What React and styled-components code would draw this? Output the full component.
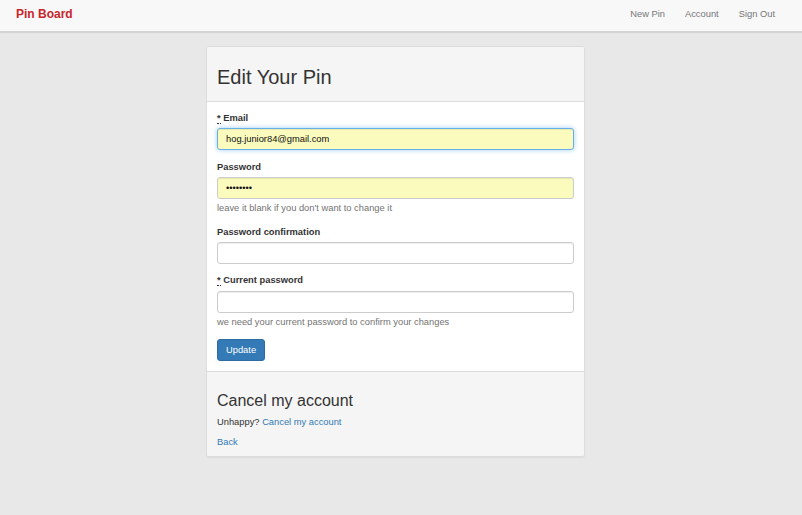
import React from "react";
import styled, { createGlobalStyle } from "styled-components";

const Global = createGlobalStyle`
  html, body { margin: 0; padding: 0; }
  body {
    background: #e8e8e8;
    font-family: "Liberation Sans", Arial, sans-serif;
    font-size: 9.33px;
    line-height: 13.33px;
    color: #333;
    min-height: 515px;
  }
  * { box-sizing: border-box; }
`;

const Navbar = styled.nav`
  height: 32px;
  background: #f8f8f8;
  border-bottom: 1px solid #d4d4d4;
  box-shadow: 0 1px 1px rgba(0,0,0,0.08);
  display: flex;
  align-items: center;
  justify-content: space-between;
  padding: 0 27px 0 16px;
`;

const Brand = styled.a`
  color: #c9252c;
  font-weight: bold;
  font-size: 12px;
  text-decoration: none;
  margin-top: -2px;
`;

const NavLinks = styled.div`
  display: flex;
  gap: 20px;
  margin-top: -2px;
`;

const NavLink = styled.a`
  color: #777;
  text-decoration: none;
  font-size: 9.33px;
`;

const Main = styled.main`
  padding: 14px 0 40px 206px;
`;

const Panel = styled.div`
  width: 379px;
  border: 1px solid #dcdcdc;
  border-radius: 3px;
  background: #fff;
  box-shadow: 0 1px 1px rgba(0,0,0,0.05);
  overflow: hidden;
`;

const PanelHeader = styled.div`
  background: #f5f5f5;
  border-bottom: 1px solid #dcdcdc;
  padding: 16px 10px 10px;
`;

const Title = styled.h2`
  margin: 0;
  font-weight: normal;
  font-size: 20px;
  line-height: 28px;
  color: #333;
`;

const PanelBody = styled.div`
  padding: 10px 10px 10px;
`;

const FormGroup = styled.div`
  margin-bottom: 10.33px;
`;

const Label = styled.label`
  display: block;
  font-weight: bold;
  margin-bottom: 3px;
  color: #333;
`;

const Abbr = styled.abbr`
  text-decoration: none;
  border-bottom: 1px dotted #333;
  cursor: help;
`;

const Input = styled.input`
  display: block;
  width: 100%;
  height: 22px;
  padding: 4px 8px;
  font-family: "Liberation Sans", Arial, sans-serif;
  font-size: 9.33px;
  color: #111;
  background: ${p => (p.$filled ? "#fafbbd" : "#fff")};
  border: 1px solid ${p => (p.$focus ? "#66afe9" : "#ccc")};
  border-radius: 3px;
  box-shadow: ${p =>
    p.$focus
      ? "inset 0 1px 1px rgba(0,0,0,.075), 0 0 5px rgba(102,175,233,.6)"
      : "inset 0 1px 1px rgba(0,0,0,.075)"};
  outline: none;
`;

const Help = styled.p`
  margin: 3px 0 0;
  color: #737373;
`;

const Button = styled.button`
  display: block;
  height: 22px;
  padding: 0 8px;
  font-family: "Liberation Sans", Arial, sans-serif;
  font-size: 9.33px;
  color: #fff;
  background: #337ab7;
  border: 1px solid #2e6da4;
  border-radius: 3px;
`;

const PanelFooter = styled.div`
  background: #f5f5f5;
  border-top: 1px solid #dcdcdc;
  padding: 19px 10px 7px;
`;

const SubTitle = styled.h3`
  margin: 0 0 5px;
  font-weight: normal;
  font-size: 16px;
  line-height: 20px;
  color: #333;
`;

const Para = styled.p`
  margin: 0 0 6px;
  &:last-child { margin-bottom: 0; }
`;

const Link = styled.a`
  color: #337ab7;
  text-decoration: none;
`;

export default function App() {
  return (
    <>
      <Global />
      <Navbar>
        <Brand href="#">Pin Board</Brand>
        <NavLinks>
          <NavLink href="#">New Pin</NavLink>
          <NavLink href="#">Account</NavLink>
          <NavLink href="#">Sign Out</NavLink>
        </NavLinks>
      </Navbar>
      <Main>
        <Panel>
          <PanelHeader>
            <Title>Edit Your Pin</Title>
          </PanelHeader>
          <PanelBody>
            <FormGroup>
              <Label>
                <Abbr title="required">*</Abbr> Email
              </Label>
              <Input $filled $focus type="email" defaultValue="hog.junior84@gmail.com" />
            </FormGroup>
            <FormGroup>
              <Label>Password</Label>
              <Input $filled type="password" defaultValue="password" />
              <Help>leave it blank if you don't want to change it</Help>
            </FormGroup>
            <FormGroup>
              <Label>Password confirmation</Label>
              <Input type="password" />
            </FormGroup>
            <FormGroup>
              <Label>
                <Abbr title="required">*</Abbr> Current password
              </Label>
              <Input type="password" />
              <Help>we need your current password to confirm your changes</Help>
            </FormGroup>
            <Button>Update</Button>
          </PanelBody>
          <PanelFooter>
            <SubTitle>Cancel my account</SubTitle>
            <Para>
              Unhappy? <Link href="#">Cancel my account</Link>
            </Para>
            <Para>
              <Link href="#">Back</Link>
            </Para>
          </PanelFooter>
        </Panel>
      </Main>
    </>
  );
}
